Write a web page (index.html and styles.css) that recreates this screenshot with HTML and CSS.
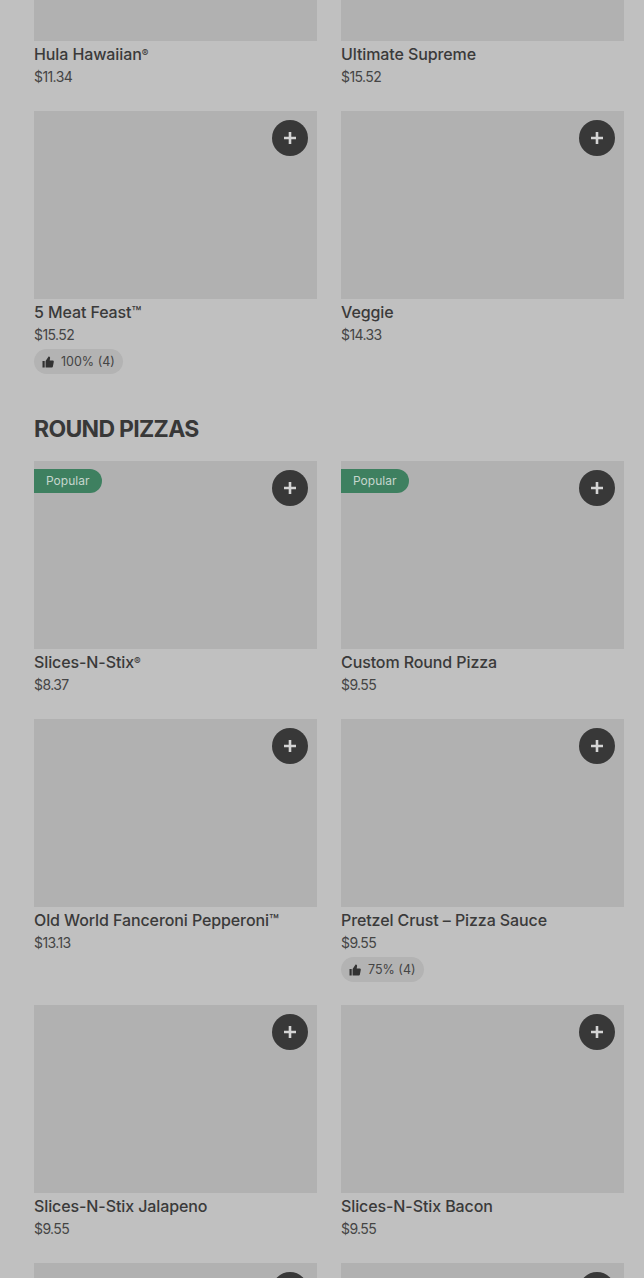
FILE: index.html
```html
<!DOCTYPE html>
<html lang="en">
<head>
<meta charset="utf-8">
<title>Menu</title>
<link rel="stylesheet" href="styles.css">
</head>
<body>
<svg class="defs" width="0" height="0" aria-hidden="true">
  <symbol id="plus" viewBox="0 0 12 12"><path d="M6 0v12M0 6h12" fill="none" stroke="currentColor" stroke-width="2.6"/></symbol>
  <symbol id="thumb" viewBox="0 0 12 12"><path d="M0.5 5h2.2v6.5H0.5zM3.6 11.5V5l3-4.5c.9 0 1.5.6 1.5 1.4L7.7 4.4h3c.7 0 1.2.6 1.1 1.3l-.9 4.9c-.1.5-.5.9-1 .9z" fill="currentColor"/></symbol>
</svg>
<main class="page">
  <section class="grid">
    <article class="item"><div class="photo"><button class="add"><svg class="plus"><use href="#plus"/></svg></button></div><h3 class="name">Hula Hawaiian<span class="mark">®</span></h3><p class="price">$11.34</p></article>
    <article class="item"><div class="photo"><button class="add"><svg class="plus"><use href="#plus"/></svg></button></div><h3 class="name">Ultimate Supreme</h3><p class="price">$15.52</p></article>
    <article class="item"><div class="photo"><button class="add"><svg class="plus"><use href="#plus"/></svg></button></div><h3 class="name">5 Meat Feast™</h3><p class="price">$15.52</p><span class="rating"><svg class="thumb"><use href="#thumb"/></svg>100% (4)</span></article>
    <article class="item"><div class="photo"><button class="add"><svg class="plus"><use href="#plus"/></svg></button></div><h3 class="name">Veggie</h3><p class="price">$14.33</p></article>
  </section>
  <h2 class="heading">ROUND PIZZAS</h2>
  <section class="grid">
    <article class="item"><div class="photo"><span class="badge">Popular</span><button class="add"><svg class="plus"><use href="#plus"/></svg></button></div><h3 class="name">Slices-N-Stix<span class="mark">®</span></h3><p class="price">$8.37</p></article>
    <article class="item"><div class="photo"><span class="badge">Popular</span><button class="add"><svg class="plus"><use href="#plus"/></svg></button></div><h3 class="name">Custom Round Pizza</h3><p class="price">$9.55</p></article>
    <article class="item"><div class="photo"><button class="add"><svg class="plus"><use href="#plus"/></svg></button></div><h3 class="name">Old World Fanceroni Pepperoni™</h3><p class="price">$13.13</p></article>
    <article class="item"><div class="photo"><button class="add"><svg class="plus"><use href="#plus"/></svg></button></div><h3 class="name">Pretzel Crust – Pizza Sauce</h3><p class="price">$9.55</p><span class="rating"><svg class="thumb"><use href="#thumb"/></svg>75% (4)</span></article>
    <article class="item"><div class="photo"><button class="add"><svg class="plus"><use href="#plus"/></svg></button></div><h3 class="name">Slices-N-Stix Jalapeno</h3><p class="price">$9.55</p></article>
    <article class="item"><div class="photo"><button class="add"><svg class="plus"><use href="#plus"/></svg></button></div><h3 class="name">Slices-N-Stix Bacon</h3><p class="price">$9.55</p></article>
    <article class="item"><div class="photo"><button class="add"><svg class="plus"><use href="#plus"/></svg></button></div></article>
    <article class="item"><div class="photo"><button class="add"><svg class="plus"><use href="#plus"/></svg></button></div></article>
  </section>
</main>
</body>
</html>
```
FILE: styles.css
```css
html, body {
  margin: 0;
  height: 1278px;
  overflow: hidden;
  background: #c0c0c0;
}
.defs { position: absolute; }
.page {
  margin-top: -147px;
  padding: 0 20px 0 34px;
  font-family: Inter, "Liberation Sans", sans-serif;
  color: #3a3a3a;
}
.grid {
  display: grid;
  grid-template-columns: 283px 283px;
  column-gap: 24px;
  row-gap: 23px;
}
.item { display: flex; flex-direction: column; align-items: flex-start; }
.photo {
  position: relative;
  width: 100%;
  height: 188px;
  background: #b1b1b1;
}
.add {
  position: absolute;
  top: 9px;
  right: 9px;
  width: 36px;
  height: 36px;
  padding: 0;
  border: 0;
  border-radius: 50%;
  background: #383838;
  color: #d4d4d4;
  display: flex;
  align-items: center;
  justify-content: center;
}
.plus { width: 12px; height: 12px; }
.badge {
  position: absolute;
  top: 8px;
  left: 0;
  height: 24px;
  line-height: 24px;
  padding: 0 13px 0 12px;
  border-radius: 0 12px 12px 0;
  background: #3e8060;
  color: #c6d6ce;
  font-size: 12px;
}
.name {
  margin: 1px 0 0;
  font-size: 16px;
  line-height: 24px;
  font-weight: 500;
  letter-spacing: -0.1px;
}
.mark {
  font-size: 10px;
  vertical-align: 3px;
  line-height: 0;
}
.price {
  margin: 0;
  font-size: 14px;
  line-height: 22px;
  letter-spacing: -0.6px;
  color: #454545;
}
.rating {
  margin-top: 3px;
  display: inline-flex;
  align-items: center;
  gap: 7px;
  height: 25px;
  padding: 0 8px;
  border-radius: 13px;
  background: #b3b3b3;
  font-size: 12.5px;
  color: #444;
}
.thumb { width: 12px; height: 12px; color: #333; }
.heading {
  margin: 39px 0 16px;
  font-size: 23px;
  line-height: 32px;
  font-weight: 700;
  letter-spacing: -0.7px;
  color: #383838;
}
```
